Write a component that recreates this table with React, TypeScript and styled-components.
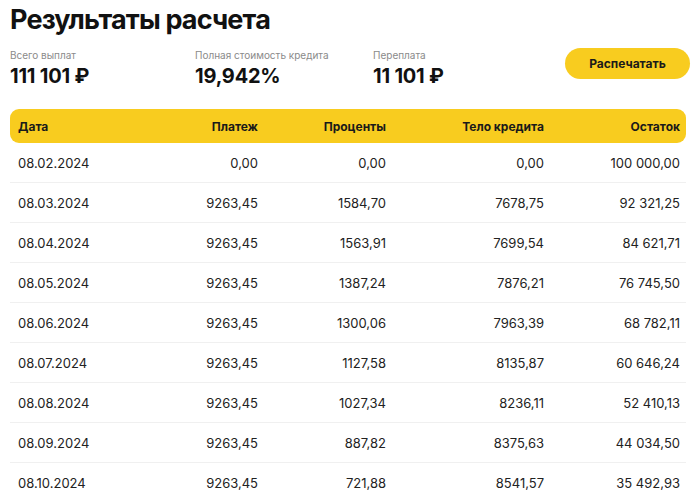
import React from "react";
import styled, { createGlobalStyle } from "styled-components";

const Global = createGlobalStyle`
  html, body { margin: 0; padding: 0; background: #ffffff; }
  body { font-family: Inter, "Noto Sans", sans-serif; color: #1a1a1a; }
`;

const Page = styled.div`
  width: 700px;
  height: 499px;
  overflow: hidden;
  padding: 0 14px 0 10px;
  box-sizing: border-box;
`;

const Title = styled.h1`
  margin: 0;
  padding-top: 3px;
  font-size: 27px;
  line-height: 34px;
  font-weight: 700;
  letter-spacing: -0.85px;
  color: #111;
`;

const Summary = styled.div`
  display: flex;
  align-items: center;
  margin-top: 12px;
  height: 38px;
`;

const Stat = styled.div<{ $w: number }>`
  width: ${(p) => p.$w}px;
  display: flex;
  flex-direction: column;
`;

const StatLabel = styled.div`
  font-size: 10px;
  line-height: 12px;
  color: #8a8a8a;
`;

const StatValue = styled.div`
  font-size: 20px;
  line-height: 24px;
  font-weight: 700;
  letter-spacing: -0.2px;
  color: #111;
  margin-top: 3px;
`;

const PrintButton = styled.button`
  margin-left: auto;
  margin-right: -4px;
  width: 125px;
  height: 31px;
  border: none;
  border-radius: 16px;
  background: #f8cc1f;
  font-family: inherit;
  font-size: 12px;
  font-weight: 700;
  color: #1a1a1a;
  align-self: flex-start;
  margin-top: -1px;
`;

const Table = styled.div`
  margin-top: 22px;
  width: 676px;
`;

const cols = "112px 128px 128px 158px 136px";

const HeaderRow = styled.div`
  display: grid;
  grid-template-columns: ${cols};
  padding: 0 6px 0 8px;
  height: 34px;
  align-items: center;
  background: #f8cc1f;
  border-radius: 9px;
  font-size: 12px;
  font-weight: 700;
  color: #1a1a1a;
`;

const Row = styled.div`
  display: grid;
  grid-template-columns: ${cols};
  padding: 0 6px 0 8px;
  height: 40px;
  box-sizing: border-box;
  align-items: center;
  border-bottom: 1px solid #f0f0f0;
  font-size: 13px;
  color: #222;
`;

const Cell = styled.div<{ $right?: boolean }>`
  text-align: ${(p) => (p.$right ? "right" : "left")};
`;

const rows: string[][] = [
  ["08.02.2024", "0,00", "0,00", "0,00", "100 000,00"],
  ["08.03.2024", "9263,45", "1584,70", "7678,75", "92 321,25"],
  ["08.04.2024", "9263,45", "1563,91", "7699,54", "84 621,71"],
  ["08.05.2024", "9263,45", "1387,24", "7876,21", "76 745,50"],
  ["08.06.2024", "9263,45", "1300,06", "7963,39", "68 782,11"],
  ["08.07.2024", "9263,45", "1127,58", "8135,87", "60 646,24"],
  ["08.08.2024", "9263,45", "1027,34", "8236,11", "52 410,13"],
  ["08.09.2024", "9263,45", "887,82", "8375,63", "44 034,50"],
  ["08.10.2024", "9263,45", "721,88", "8541,57", "35 492,93"],
];

const headers = ["Дата", "Платеж", "Проценты", "Тело кредита", "Остаток"];

export default function App() {
  return (
    <Page>
      <Global />
      <Title>Результаты расчета</Title>
      <Summary>
        <Stat $w={185}>
          <StatLabel>Всего выплат</StatLabel>
          <StatValue>111 101 ₽</StatValue>
        </Stat>
        <Stat $w={178}>
          <StatLabel>Полная стоимость кредита</StatLabel>
          <StatValue>19,942%</StatValue>
        </Stat>
        <Stat $w={150}>
          <StatLabel>Переплата</StatLabel>
          <StatValue>11 101 ₽</StatValue>
        </Stat>
        <PrintButton>Распечатать</PrintButton>
      </Summary>
      <Table>
        <HeaderRow>
          {headers.map((h, i) => (
            <Cell key={h} $right={i > 0}>
              {h}
            </Cell>
          ))}
        </HeaderRow>
        {rows.map((r) => (
          <Row key={r[0]}>
            {r.map((c, i) => (
              <Cell key={i} $right={i > 0}>
                {c}
              </Cell>
            ))}
          </Row>
        ))}
      </Table>
    </Page>
  );
}
